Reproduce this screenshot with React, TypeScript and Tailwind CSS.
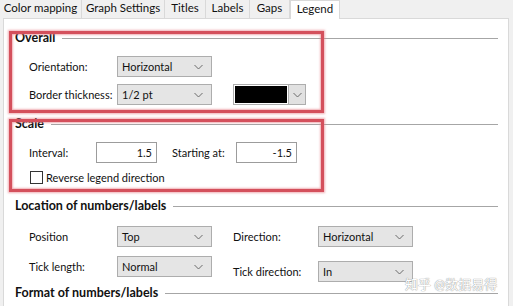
import { type ReactNode } from "react";

const TABS = [
  { label: "Color mapping", w: "w-[82px]" },
  { label: "Graph Settings", w: "w-[83px]" },
  { label: "Titles", w: "w-[41px]" },
  { label: "Labels", w: "w-[44px]" },
  { label: "Gaps", w: "w-[40px]" },
];

function Chevron() {
  return (
    <svg width="9" height="6" viewBox="0 0 9 6" className="shrink-0">
      <path d="M0.5 1 L4.5 5 L8.5 1" fill="none" stroke="#6b6b6b" strokeWidth="1" />
    </svg>
  );
}

function Select({ value, className = "" }: { value: string; className?: string }) {
  return (
    <div
      className={`flex h-[21px] w-[95px] shrink-0 items-center justify-between border border-[#adadad] bg-[#e5e5e5] pl-[4px] pr-[8px] ${className}`}
    >
      <span>{value}</span>
      <Chevron />
    </div>
  );
}

function NumberBox({ value }: { value: string }) {
  return (
    <div className="flex h-[21px] w-[61px] shrink-0 items-center justify-end border border-[#9c9c9c] bg-white pr-[4px]">
      {value}
    </div>
  );
}

function Heading({ children, className = "" }: { children: ReactNode; className?: string }) {
  return (
    <div className={`flex h-[16px] items-center gap-[7px] pl-[11px] pr-[10px] ${className}`}>
      <span className="text-[12.5px] font-bold">{children}</span>
      <div className="h-px flex-1 bg-[#a6a6a6]" />
    </div>
  );
}

export default function App() {
  return (
    <div
      className="relative h-[306px] w-[513px] overflow-hidden whitespace-nowrap bg-[#f0f0f0] text-[11px] leading-none text-[#111]"
      style={{ fontFamily: 'Lato, "Noto Sans", "Noto Sans CJK SC", sans-serif' }}
    >
      {/* Tabs */}
      <div className="flex h-[18px] items-stretch text-[11.5px]">
        {TABS.map((t) => (
          <div key={t.label} className={`flex items-center justify-center border-r border-[#d9d9d9] pb-[2px] ${t.w}`}>
            {t.label}
          </div>
        ))}
        <div className="relative z-10 flex h-[19px] w-[50px] items-center justify-center border-x border-t border-[#d9d9d9] bg-white pb-[3px]">
          Legend
        </div>
      </div>

      {/* Panel */}
      <div className="ml-[3px] h-[300px] w-[506px] border border-[#d9d9d9] bg-white">
        <Heading className="mt-[11px]">Overall</Heading>

        <div className="mt-[10px] flex items-center pl-[25px]">
          <span className="w-[88px]">Orientation:</span>
          <Select value="Horizontal" />
        </div>
        <div className="mt-[7px] flex items-center pl-[25px]">
          <span className="w-[88px]">Border thickness:</span>
          <Select value="1/2 pt" />
          <div className="ml-[21px] flex h-[21px] w-[73px] items-stretch border border-[#adadad] bg-white">
            <div className="m-[1px] flex-1 bg-black" />
            <div className="flex w-[17px] items-center justify-center border-l border-[#adadad] bg-[#e1e1e1]">
              <Chevron />
            </div>
          </div>
        </div>

        <Heading className="mt-[11px]">Scale</Heading>

        <div className="mt-[10px] flex items-center pl-[25px]">
          <span className="w-[67px]">Interval:</span>
          <NumberBox value="1.5" />
          <span className="ml-[15px] w-[64px]">Starting at:</span>
          <NumberBox value="-1.5" />
        </div>
        <div className="mt-[8px] flex items-center pl-[26px]">
          <div className="h-[13px] w-[13px] border border-[#333] bg-white" />
          <span className="ml-[3px]">Reverse legend direction</span>
        </div>

        <Heading className="mt-[14px]">Location of numbers/labels</Heading>

        <div className="mt-[12px] flex items-center pl-[25px]">
          <span className="w-[88px]">Position</span>
          <Select value="Top" />
          <span className="ml-[21px] w-[85px]">Direction:</span>
          <Select value="Horizontal" />
        </div>
        <div className="mt-[9px] flex h-[26px] items-start pl-[25px]">
          <span className="mt-[5px] w-[88px]">Tick length:</span>
          <Select value="Normal" />
          <span className="ml-[21px] mt-[10px] w-[85px]">Tick direction:</span>
          <Select value="In" className="mt-[5px]" />
        </div>

        <Heading className="mt-[3px]">Format of numbers/labels</Heading>
      </div>

      {/* Red annotation boxes */}
      <div className="absolute left-[9px] top-[31px] h-[82px] w-[315px] border-[3px] border-[#d4505c] shadow-[0_0_2px_1px_rgba(230,120,130,0.6),inset_0_0_2px_1px_rgba(230,120,130,0.6)]" />
      <div className="absolute left-[9px] top-[119px] h-[73px] w-[315px] border-[3px] border-[#d4505c] shadow-[0_0_2px_1px_rgba(230,120,130,0.6),inset_0_0_2px_1px_rgba(230,120,130,0.6)]" />

      {/* Watermark */}
      <div
        className="absolute left-[405px] top-[278px] text-[13px] text-white"
        style={{ textShadow: "0 0 1px #9a9a9a, 0 0 1px #9a9a9a" }}
      >
        知乎 @数据易得
      </div>
    </div>
  );
}
